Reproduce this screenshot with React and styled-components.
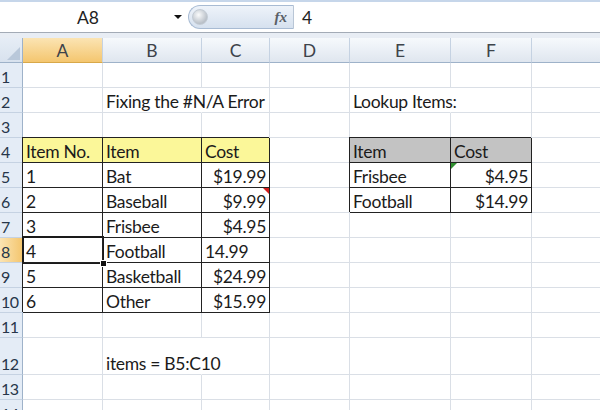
import React from 'react';
import styled, { createGlobalStyle, css } from 'styled-components';

const Global = createGlobalStyle`
	html, body { margin: 0; padding: 0; background: #fff; }
	body { font-family: Lato, "Liberation Sans", sans-serif; }
`;

const Window = styled.div`
	width: 600px;
	height: 410px;
	overflow: hidden;
	background: #fff;
	font-family: Lato, "Liberation Sans", sans-serif;
	font-size: 17.5px;
	color: #1b1b1b;
`;

const FormulaBar = styled.div`
	display: flex;
	height: 30px;
	border-top: 2px solid #c6d6ea;
	border-bottom: 1px solid #a3abb6;
	background: #fff;
`;

const NameBox = styled.div`
	width: 188px;
	display: flex;
	align-items: center;
`;

const NameText = styled.span`
	flex: 1;
	text-align: center;
	padding-left: 2px;
	color: #222;
`;

const Arrow = styled.span`
	width: 0;
	height: 0;
	margin-right: 6px;
	border-left: 4px solid transparent;
	border-right: 4px solid transparent;
	border-top: 4px solid #111;
`;

const FxPill = styled.div`
	width: 106px;
	height: 24px;
	margin-top: 3px;
	box-sizing: border-box;
	display: flex;
	align-items: center;
	justify-content: space-between;
	padding: 0 6px 0 3px;
	border: 1px solid #a8bbd3;
	border-right: 1px solid #b9c6d6;
	border-radius: 13px 0 0 13px;
	background: linear-gradient(#eef3fa, #d6e1ef);
`;

const Grip = styled.span`
	width: 14px;
	height: 14px;
	border-radius: 50%;
	background: radial-gradient(circle at 40% 35%, #fafbfc, #b9c0c8 70%);
	border: 1px solid #c3cbd4;
`;

const Fx = styled.span`
	font-family: "Liberation Serif", serif;
	font-style: italic;
	font-weight: bold;
	font-size: 15px;
	color: #5a5f66;
`;

const FormulaInput = styled.div`
	flex: 1;
	display: flex;
	align-items: center;
	padding-left: 8px;
	color: #222;
`;

const Band = styled.div`
	height: 5px;
	background: #e8edf4;
`;

const Grid = styled.div`
	display: grid;
	grid-template-columns: 23px 80px 99px 68px 80px 101px 81px 80px;
	grid-template-rows: repeat(12, 25px) 37px 25px 25px;
	background: #fff;
`;

const ColHead = styled.div`
	box-sizing: border-box;
	display: flex;
	align-items: center;
	justify-content: center;
	border-right: 1px solid #c5d2e2;
	border-bottom: 1px solid #9eb2c9;
	color: #3d434a;
	background: ${p => (p.$active ? 'linear-gradient(#fbe4b3, #f4c66f)' : 'linear-gradient(#f6f9fc, #dfe6ef)')};
	${p => p.$active && css`border-bottom-color: #d8a849;`}
`;

const Corner = styled.div`
	box-sizing: border-box;
	position: relative;
	border-right: 1px solid #9eb2c9;
	border-bottom: 1px solid #9eb2c9;
	background: linear-gradient(#e6edf6, #d8e2ee);
	&::after {
		content: '';
		position: absolute;
		right: 2px;
		bottom: 2px;
		border-left: 13px solid transparent;
		border-bottom: 13px solid #b9c8da;
	}
`;

const RowHead = styled.div`
	box-sizing: border-box;
	display: flex;
	align-items: flex-end;
	padding: 0 0 1px 1px;
	font-size: 16px;
	letter-spacing: -0.6px;
	border-right: 1px solid #9eb2c9;
	border-bottom: 1px solid #c5d2e2;
	color: #27364a;
	background: ${p => (p.$active ? 'linear-gradient(90deg, #fbe4b3, #f4c66f)' : '#e4ecf6')};
`;

const Cell = styled.div`
	box-sizing: border-box;
	position: relative;
	display: flex;
	align-items: flex-end;
	justify-content: ${p => (p.$right ? 'flex-end' : 'flex-start')};
	padding: 0 3px 0 3px;
	white-space: nowrap;
	letter-spacing: -0.3px;
	border-right: 1px solid ${p => (p.$spill ? 'transparent' : '#dadfe6')};
	border-bottom: 1px solid #dadfe6;
	background: ${p => p.$bg || 'transparent'};
	${p => p.$boxed && css`
		border-right-color: #222;
		border-bottom-color: #222;
		box-shadow: -1px -1px 0 #222;
	`}
	${p => p.$selected && css`
		&::after {
			content: '';
			position: absolute;
			left: -1px;
			top: -2px;
			right: -2px;
			bottom: -2px;
			border: 2px solid #1a1a1a;
			pointer-events: none;
		}
	`}
`;

const FillHandle = styled.span`
	position: absolute;
	right: -5px;
	bottom: -5px;
	width: 5px;
	height: 5px;
	background: #111;
	border: 1px solid #fff;
	z-index: 2;
`;

const Marker = styled.span`
	position: absolute;
	top: 0;
	width: 0;
	height: 0;
	${p => (p.$side === 'right'
		? css`right: 0; border-left: 6px solid transparent; border-top: 6px solid #d21e1e;`
		: css`left: 0; border-right: 6px solid transparent; border-top: 6px solid #2f8f2f;`)}
`;

const columns = ['A', 'B', 'C', 'D', 'E', 'F', ''];

const YELLOW = '#fbf799';
const GRAY = '#c3c3c3';

// content keyed by row number, then column letter
const sheet = {
	2: { B: { v: 'Fixing the #N/A Error', spill: true }, E: { v: 'Lookup Items:', spill: true } },
	4: {
		A: { v: 'Item No.', bg: YELLOW, boxed: true },
		B: { v: 'Item', bg: YELLOW, boxed: true },
		C: { v: 'Cost', bg: YELLOW, boxed: true },
		E: { v: 'Item', bg: GRAY, boxed: true },
		F: { v: 'Cost', bg: GRAY, boxed: true },
	},
	5: {
		A: { v: '1', boxed: true }, B: { v: 'Bat', boxed: true }, C: { v: '$19.99', right: true, boxed: true },
		E: { v: 'Frisbee', boxed: true }, F: { v: '$4.95', right: true, boxed: true, marker: 'left' },
	},
	6: {
		A: { v: '2', boxed: true }, B: { v: 'Baseball', boxed: true }, C: { v: '$9.99', right: true, boxed: true, marker: 'right' },
		E: { v: 'Football', boxed: true }, F: { v: '$14.99', right: true, boxed: true },
	},
	7: { A: { v: '3', boxed: true }, B: { v: 'Frisbee', boxed: true }, C: { v: '$4.95', right: true, boxed: true } },
	8: { A: { v: '4', boxed: true, selected: true }, B: { v: 'Football', boxed: true }, C: { v: '14.99', boxed: true } },
	9: { A: { v: '5', boxed: true }, B: { v: 'Basketball', boxed: true }, C: { v: '$24.99', right: true, boxed: true } },
	10: { A: { v: '6', boxed: true }, B: { v: 'Other', boxed: true }, C: { v: '$15.99', right: true, boxed: true } },
	12: { B: { v: 'items = B5:C10', spill: true } },
};

export default function App() {
	const rows = Array.from({ length: 14 }, (_, i) => i + 1);

	return (
		<Window>
			<Global />
			<FormulaBar>
				<NameBox>
					<NameText>A8</NameText>
					<Arrow />
				</NameBox>
				<FxPill>
					<Grip />
					<Fx>fx</Fx>
				</FxPill>
				<FormulaInput>4</FormulaInput>
			</FormulaBar>
			<Band />
			<Grid>
				<Corner />
				{columns.map((c, i) => (
					<ColHead key={i} $active={c === 'A'}>{c}</ColHead>
				))}
				{rows.map(r => (
					<React.Fragment key={r}>
						<RowHead $active={r === 8}>{r}</RowHead>
						{columns.map((c, i) => {
							const d = (sheet[r] && sheet[r][c]) || {};
							return (
								<Cell
									key={i}
									$right={d.right}
									$spill={d.spill}
									$bg={d.bg}
									$boxed={d.boxed}
									$selected={d.selected}
								>
									{d.v}
									{d.marker && <Marker $side={d.marker} />}
									{d.selected && <FillHandle />}
								</Cell>
							);
						})}
					</React.Fragment>
				))}
			</Grid>
		</Window>
	);
}
